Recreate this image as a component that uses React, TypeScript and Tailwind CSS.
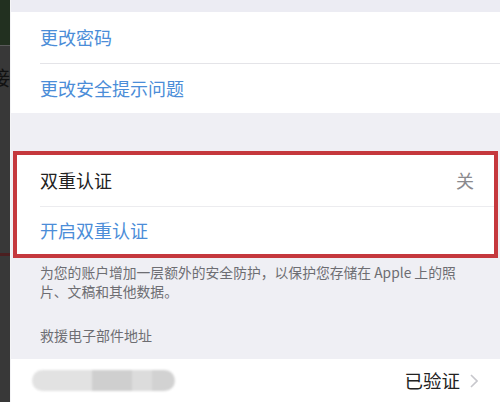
import React from "react";

const font = { fontFamily: '"Noto Sans CJK SC", "Noto Sans", sans-serif' };

export default function App() {
  return (
    <div className="flex w-[500px] h-[402px] overflow-hidden bg-[#efeff4]" style={font}>
      {/* left strip */}
      <div className="w-[10px] flex flex-col shrink-0 bg-[#383838] overflow-hidden">
        <div className="h-[45px] bg-[#223020]" />
        <div className="h-[1px] bg-[#5a5a5a]" />
        <div className="relative h-[40px]">
          <span className="absolute left-[-10px] top-[22px] text-[20px] leading-none text-[#111]">接</span>
        </div>
        <div className="h-[167px]" />
        <div className="h-[3px] bg-[#4a1f20]" />
        <div className="flex-1" />
      </div>
      <div className="w-[1px] bg-[#f4f4f6] shrink-0" />
      <div className="flex-1 flex flex-col bg-[#efeff4]">
        <div className="h-[12px] bg-[#ececf3]" />
        <div className="bg-white flex flex-col">
          <div className="h-[51px] flex items-center pl-[29px] text-[18px] text-[#4b8dd8]">更改密码</div>
          <div className="h-[1px] ml-[29px] bg-[#e4e4e8]" />
          <div className="h-[49px] flex items-center pl-[29px] text-[18px] text-[#4b8dd8]">更改安全提示问题</div>
        </div>
        <div className="h-[38px]" />
        <div className="mx-[2px] border-[4px] border-[#c5383d] bg-white flex flex-col h-[107px]">
          <div className="h-[51px] flex items-center justify-between pl-[23px] pr-[20px]">
            <span className="text-[18px] text-[#222]">双重认证</span>
            <span className="text-[18px] text-[#8a8a8e]">关</span>
          </div>
          <div className="h-[1px] ml-[23px] bg-[#ececef]" />
          <div className="flex-1 flex items-center pl-[23px] text-[18px] text-[#4b8dd8]">开启双重认证</div>
        </div>
        <div className="pl-[29px] pr-[10px] pt-[5px] text-[13.8px] leading-[19px] text-[#6d6d72] whitespace-nowrap">
          为您的账户增加一层额外的安全防护，以保护您存储在 Apple 上的照
          <br />
          片、文稿和其他数据。
        </div>
        <div className="pl-[29px] pt-[25px] text-[14px] leading-[19px] text-[#6d6d72]">救援电子部件地址</div>
        <div className="mt-[14px] flex-1 bg-white flex items-center justify-between pl-[21px] pr-[22px]">
          <div className="flex h-[21px] w-[143px] rounded-full overflow-hidden blur-[1px]">
            <div className="w-[60px] bg-[#e2e2e2]" />
            <div className="w-[40px] bg-[#cfcfcf]" />
            <div className="w-[20px] bg-[#dcdcdc]" />
            <div className="w-[23px] bg-[#d2d2d2]" />
          </div>
          <div className="flex items-center gap-[10px]">
            <span className="text-[18.5px] text-[#222]">已验证</span>
            <svg width="8" height="14" viewBox="0 0 8 14" fill="none">
              <path d="M1 1l6 6-6 6" stroke="#c7c7cc" strokeWidth="1.6" />
            </svg>
          </div>
        </div>
      </div>
    </div>
  );
}
